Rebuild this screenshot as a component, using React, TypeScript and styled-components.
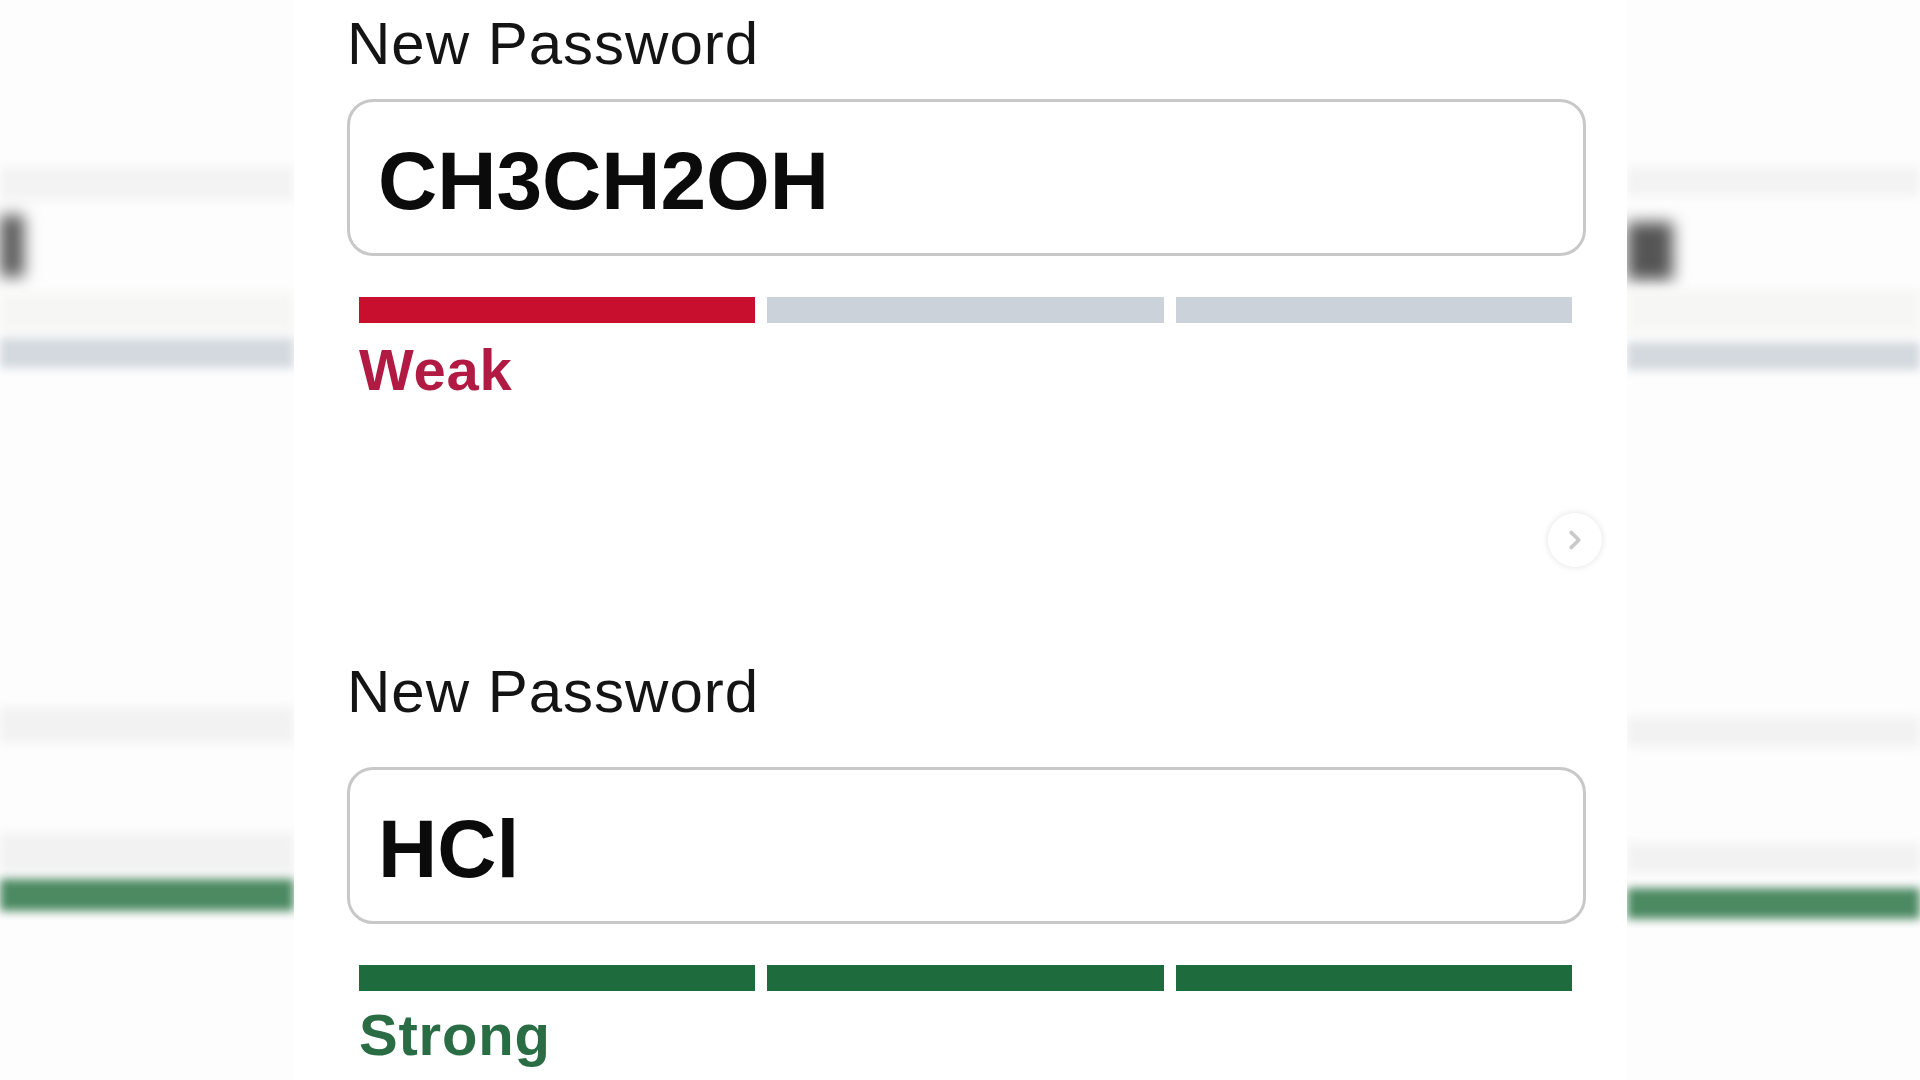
import React from 'react';
import styled, { createGlobalStyle } from 'styled-components';
import { ChevronRight } from 'lucide-react';

const GlobalStyle = createGlobalStyle`
  html, body {
    margin: 0;
    padding: 0;
    background: #ffffff;
  }
  body {
    font-family: "Liberation Sans", Arial, sans-serif;
  }
`;

const Screen = styled.div`
  display: grid;
  grid-template-columns: 294px 1333px 293px;
  width: 1920px;
  height: 1080px;
  overflow: hidden;
  background: #fdfdfd;
`;

// blurred copy of the picture that fills the sides
const Backdrop = styled.div`
  display: flex;
  flex-direction: column;
  overflow: hidden;
  background: #fdfdfd;
`;

const Smudge = styled.div<{ $mt: number; $h: number; $w?: number; $color: string; $blur: number }>`
  flex: none;
  margin-top: ${({ $mt }) => $mt}px;
  height: ${({ $h }) => $h}px;
  width: ${({ $w }) => ($w ? `${$w}px` : '100%')};
  background: ${({ $color }) => $color};
  filter: blur(${({ $blur }) => $blur}px);
`;

const Panel = styled.main`
  position: relative;
  display: flex;
  flex-direction: column;
  padding: 0 41px 0 53px;
  background: #ffffff;
`;

const Field = styled.section<{ $mt: number }>`
  display: flex;
  flex-direction: column;
  margin-top: ${({ $mt }) => $mt}px;
`;

const Label = styled.label`
  font-size: 60px;
  line-height: 1;
  color: #141414;
  letter-spacing: 1px;
`;

const Input = styled.div<{ $mt: number }>`
  box-sizing: border-box;
  height: 157px;
  margin-top: ${({ $mt }) => $mt}px;
  padding: 38px 28px 0;
  border: 3px solid #c8c8c8;
  border-radius: 26px;
  background: #ffffff;
  font-size: 82px;
  font-weight: 700;
  line-height: 1;
  color: #0b0b0b;
`;

const Meter = styled.div`
  display: grid;
  grid-template-columns: repeat(3, 1fr);
  gap: 12px;
  margin: 41px 14px 0 12px;
`;

const Segment = styled.div<{ $color: string }>`
  height: 26px;
  background: ${({ $color }) => $color};
`;

const Strength = styled.div<{ $color: string; $mt: number }>`
  margin: ${({ $mt }) => $mt}px 0 0 12px;
  font-size: 58px;
  font-weight: 700;
  line-height: 1;
  letter-spacing: 0.8px;
  color: ${({ $color }) => $color};
`;

const NextButton = styled.button`
  position: absolute;
  top: 513px;
  right: 25px;
  display: flex;
  align-items: center;
  justify-content: center;
  width: 54px;
  height: 54px;
  padding: 0;
  border: none;
  border-radius: 50%;
  background: #ffffff;
  box-shadow: 0 0 7px rgba(0, 0, 0, 0.12);
  color: #c9c9c9;
`;

type Smear = { top: number; bottom: number; color: string; w?: number; blur?: number };

const leftSmears: Smear[] = [
  { top: 167, bottom: 200, color: '#f3f3f3' },
  { top: 215, bottom: 277, color: '#5a5a5a', w: 24, blur: 8 },
  { top: 293, bottom: 333, color: '#f6f6f4' },
  { top: 338, bottom: 368, color: '#d3d9de' },
  { top: 707, bottom: 743, color: '#f2f2f2' },
  { top: 833, bottom: 873, color: '#f2f2f2' },
  { top: 879, bottom: 911, color: '#4c8a62' },
];

const rightSmears: Smear[] = [
  { top: 167, bottom: 196, color: '#f3f3f3' },
  { top: 222, bottom: 280, color: '#555555', w: 46, blur: 8 },
  { top: 290, bottom: 333, color: '#f6f6f4' },
  { top: 342, bottom: 370, color: '#d3d9de' },
  { top: 717, bottom: 747, color: '#f2f2f2' },
  { top: 843, bottom: 873, color: '#f2f2f2' },
  { top: 888, bottom: 919, color: '#4c8a62' },
];

const Side: React.FC<{ smears: Smear[] }> = ({ smears }) => (
  <Backdrop>
    {smears.map((s, i) => (
      <Smudge
        key={i}
        $mt={s.top - (i ? smears[i - 1].bottom : 0)}
        $h={s.bottom - s.top}
        $w={s.w}
        $color={s.color}
        $blur={s.blur ?? 5}
      />
    ))}
  </Backdrop>
);

type PasswordFieldProps = {
  value: string;
  level: number;
  label: string;
  color: string;
  textColor: string;
  top: number;
  inputGap: number;
  labelGap: number;
};

const PasswordField: React.FC<PasswordFieldProps> = ({ value, level, label, color, textColor, top, inputGap, labelGap }) => (
  <Field $mt={top}>
    <Label>New Password</Label>
    <Input $mt={inputGap}>{value}</Input>
    <Meter>
      {[0, 1, 2].map((i) => (
        <Segment key={i} $color={i < level ? color : '#cbd2d9'} />
      ))}
    </Meter>
    <Strength $color={textColor} $mt={labelGap}>{label}</Strength>
  </Field>
);

export default function App() {
  return (
    <>
      <GlobalStyle />
      <Screen>
        <Side smears={leftSmears} />
        <Panel>
          <PasswordField
            value="CH3CH2OH"
            level={1}
            label="Weak"
            color="#c8102e"
            textColor="#b11a42"
            top={14}
            inputGap={25}
            labelGap={18}
          />
          <PasswordField
            value="HCl"
            level={3}
            label="Strong"
            color="#1e6b3d"
            textColor="#2a6d45"
            top={263}
            inputGap={45}
            labelGap={15}
          />
          <NextButton aria-label="Next">
            <ChevronRight size={30} strokeWidth={3} />
          </NextButton>
        </Panel>
        <Side smears={rightSmears} />
      </Screen>
    </>
  );
}
